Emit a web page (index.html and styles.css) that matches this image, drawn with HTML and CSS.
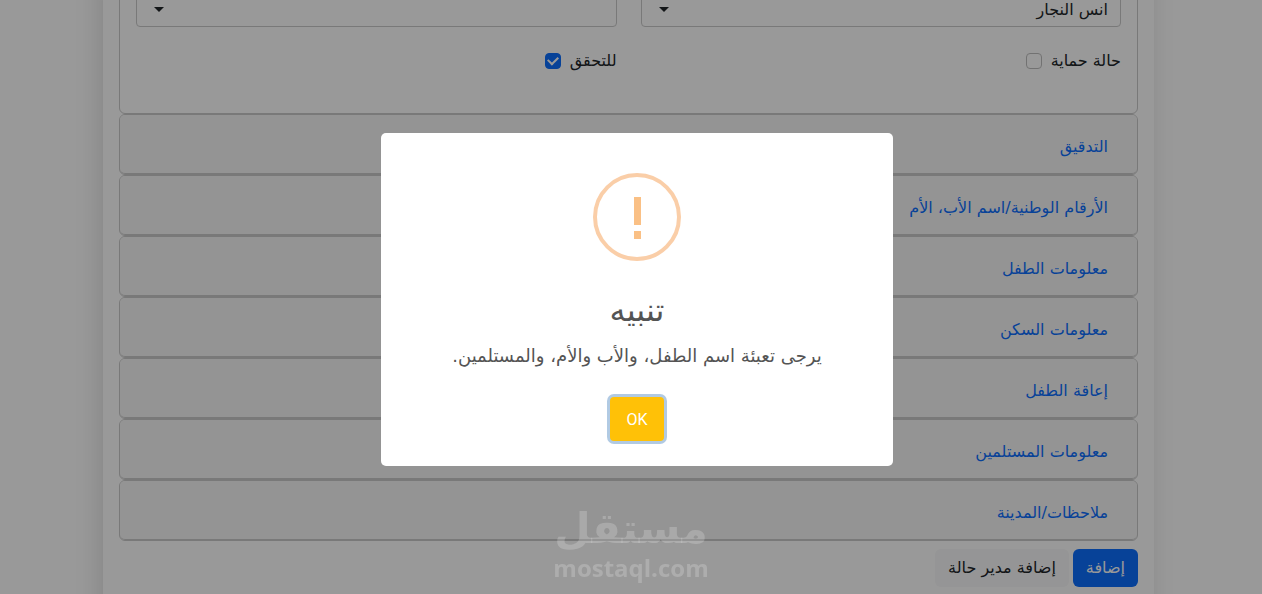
FILE: index.html
```
<!DOCTYPE html>
<html lang="ar" dir="rtl">
  <head>
    <title>إضافة حالة</title>
    <meta charset="UTF-8" />
    <meta name="viewport" content="width=device-width, initial-scale=1.0" />
    <link rel="stylesheet" href="styles.css">
  </head>

  <body>
    <main class="page">
      <form class="case-form">
        <section class="card card-open">
          <div class="row">
            <div class="select-wrap">
              <select class="form-select" name="manager" aria-label="مدير الحالة">
                <option>انس النجار</option>
              </select>
            </div>
            <div class="select-wrap">
              <select class="form-select" name="branch" aria-label="الفرع">
                <option></option>
              </select>
            </div>
          </div>
          <div class="row">
            <div class="form-check">
              <label for="protection">حالة حماية</label>
              <input type="checkbox" id="protection" />
            </div>
            <div class="form-check">
              <label for="verify">للتحقق</label>
              <input type="checkbox" id="verify" checked />
            </div>
          </div>
        </section>

        <section class="card"><h5 class="card-header"><a href="#audit">التدقيق</a></h5></section>
        <section class="card"><h5 class="card-header"><a href="#ids">الأرقام الوطنية/اسم الأب، الأم</a></h5></section>
        <section class="card"><h5 class="card-header"><a href="#child">معلومات الطفل</a></h5></section>
        <section class="card"><h5 class="card-header"><a href="#housing">معلومات السكن</a></h5></section>
        <section class="card"><h5 class="card-header"><a href="#disability">إعاقة الطفل</a></h5></section>
        <section class="card"><h5 class="card-header"><a href="#recipients">معلومات المستلمين</a></h5></section>
        <section class="card"><h5 class="card-header"><a href="#notes">ملاحظات/المدينة</a></h5></section>

        <div class="actions">
          <button type="submit" class="btn btn-primary">إضافة</button>
          <button type="button" class="btn btn-light">إضافة مدير حالة</button>
        </div>
      </form>
    </main>

    <div class="overlay">
      <div class="popup" role="dialog" aria-modal="true" aria-labelledby="popup-title">
        <svg class="popup-icon" viewBox="0 0 88 88" aria-hidden="true">
          <circle cx="44" cy="44" r="42" fill="none" stroke="#facea8" stroke-width="4" />
          <rect x="41" y="24" width="7" height="28" fill="#fac085" />
          <rect x="41" y="58" width="7" height="8" fill="#fac085" />
        </svg>
        <h2 class="popup-title" id="popup-title">تنبيه</h2>
        <p class="popup-text">يرجى تعبئة اسم الطفل، والأب والأم، والمستلمين.</p>
        <button type="button" class="popup-confirm">OK</button>
      </div>
    </div>

    <div class="watermark">
      <span class="watermark-name">مستقل</span>
      <span class="watermark-url">mostaql.com</span>
    </div>
  </body>
</html>
```
FILE: styles.css
```
:root {
  --color-text: #212529;
  --color-border: #cacaca;
  --color-primary: #0d6efd;
  --color-warning: #ffc107;
  --color-popup-text: #545454;
}

* {
  box-sizing: border-box;
}

body {
  margin: 0;
  height: 100vh;
  overflow: hidden;
  font-family: "DejaVu Sans", sans-serif;
  font-size: 16px;
  line-height: 24px;
  color: var(--color-text);
  background-color: #fff;
}

button,
select {
  font: inherit;
}

.page {
  margin: 0 108px 0 103px;
  padding: 0 16px 48px;
  background-color: #fff;
  box-shadow: -4px 0 24px rgba(0, 0, 0, 0.12);
}

.card {
  border: 1px solid var(--color-border);
  border-radius: 6px;
}

/* scrolled up under the top edge of the window */
.card-open {
  margin-top: -28px;
  padding: 16px 16px 40px;
}

.row {
  display: grid;
  grid-template-columns: 1fr 1fr;
  gap: 24px;
  margin-bottom: 22px;
}

.card-open .row:last-child {
  margin-bottom: 0;
}

.select-wrap {
  position: relative;
}

.select-wrap::after {
  content: "";
  position: absolute;
  left: 18px;
  top: 18px;
  border: 5px solid transparent;
  border-top-color: var(--color-text);
  border-bottom: 0;
  pointer-events: none;
}

.form-select {
  display: block;
  width: 100%;
  height: 38px;
  padding: 8px 12px 4px;
  border: 1px solid var(--color-border);
  border-radius: 4px;
  color: var(--color-text);
  background-color: #fff;
  appearance: none;
}

.form-check {
  display: flex;
  align-items: center;
  gap: 9px;
}

.form-check input {
  width: 16px;
  height: 16px;
  margin: 0;
  border: 1px solid #bfbfbf;
  border-radius: 4px;
  appearance: none;
}

.form-check input:checked {
  display: grid;
  place-items: center;
  border-color: var(--color-primary);
  background-color: var(--color-primary);
}

.form-check input:checked::after {
  content: "";
  width: 8px;
  height: 5px;
  margin-bottom: 3px;
  border: solid #fff;
  border-width: 0 0 2px 2px;
  transform: rotate(-45deg);
}

.card-header {
  margin: 0;
  padding: 8px 16px;
  border-bottom: 1px solid var(--color-border);
  border-radius: 5px;
  background-color: #f7f7f7;
  font-size: 16px;
  font-weight: 400;
}

.card-header a {
  display: inline-block;
  padding: 12px 13px 6px;
  color: var(--color-primary);
  text-decoration: none;
}

.actions {
  display: flex;
  gap: 4px;
  padding: 8px 0 0;
}

.btn {
  height: 38px;
  padding: 6px 12px;
  border: 1px solid transparent;
  border-radius: 6px;
  cursor: pointer;
}

.btn-primary {
  color: #fff;
  background-color: var(--color-primary);
}

.btn-light {
  color: var(--color-text);
  background-color: #f8f9fa;
}

.overlay {
  position: fixed;
  inset: 0;
  display: flex;
  align-items: center;
  justify-content: center;
  padding: 5px 0 0 12px;
  background-color: rgba(0, 0, 0, 0.4);
}

.popup {
  display: flex;
  flex-direction: column;
  align-items: center;
  width: 512px;
  max-width: 100%;
  padding: 40px 20px 25px;
  border-radius: 5px;
  color: var(--color-popup-text);
  background-color: #fff;
}

.popup-icon {
  width: 88px;
  height: 88px;
}

.popup-title {
  margin: 27px 0 8px;
  font-size: 32px;
  font-weight: 400;
  line-height: 44px;
}

.popup-text {
  margin: 0;
  font-size: 18px;
  line-height: 32px;
}

.popup-confirm {
  min-width: 54px;
  height: 44px;
  margin-top: 25px;
  padding: 2px 16px 0;
  border: 0;
  border-radius: 4px;
  font-family: Roboto, sans-serif;
  color: #fff;
  background-color: var(--color-warning);
  box-shadow: 0 0 0 3px rgba(100, 150, 200, 0.5);
  cursor: pointer;
}

.watermark {
  position: fixed;
  left: 0;
  right: 0;
  bottom: 12px;
  display: flex;
  flex-direction: column;
  align-items: center;
  color: rgba(255, 255, 255, 0.2);
  font-weight: 700;
  pointer-events: none;
}

.watermark-name {
  font-family: "DejaVu Sans", sans-serif;
  font-size: 42px;
  line-height: 50px;
}

.watermark-url {
  font-family: "Open Sans", sans-serif;
  font-size: 24px;
  line-height: 28px;
}
```
